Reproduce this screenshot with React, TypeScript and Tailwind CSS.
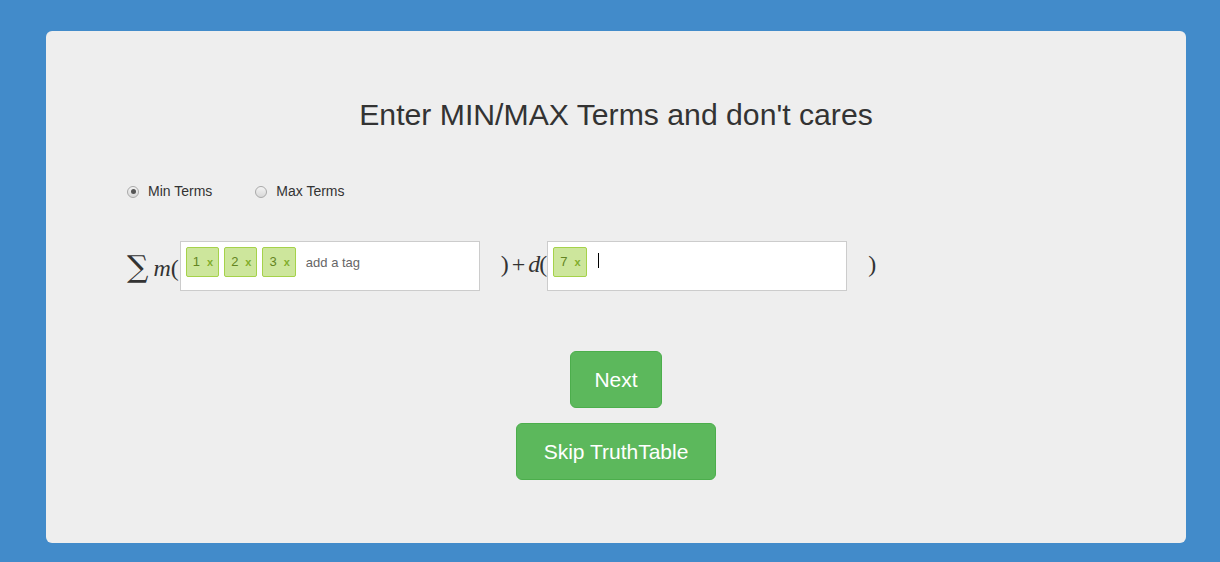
import React from "react";

function Radio({ checked, label }: { checked?: boolean; label: string }) {
  return (
    <label className="flex items-center gap-[9px] text-[14px] text-[#333]">
      <span className="flex h-[12px] w-[12px] items-center justify-center rounded-full border border-[#a9a9a9] bg-gradient-to-b from-[#f4f4f4] to-[#d8d8d8]">
        {checked && <span className="h-[5px] w-[5px] rounded-full bg-[#555]" />}
      </span>
      {label}
    </label>
  );
}

function Tag({ value }: { value: string }) {
  return (
    <span className="flex h-[30px] items-center rounded-[2px] border border-[#a5d24a] bg-[#cde69c] pl-[6px] pr-[5px] text-[13px] text-[#638421]">
      {value}
      <span className="ml-[7px] text-[11px] font-bold text-[#82ad2b]">x</span>
    </span>
  );
}

function TagBox({ tags, placeholder, cursor }: { tags: string[]; placeholder?: string; cursor?: boolean }) {
  return (
    <div className="flex h-[50px] w-[300px] shrink-0 items-start gap-[5px] border border-[#cccccc] bg-white p-[5px]">
      {tags.map((t) => (
        <Tag key={t} value={t} />
      ))}
      {placeholder && <span className="ml-[5px] mt-[6px] text-[13px] text-[#666]">{placeholder}</span>}
      {cursor && <span className="ml-[6px] mt-[6px] h-[15px] w-px bg-black" />}
    </div>
  );
}

const math = "font-['Liberation_Serif',serif] text-[24px] leading-none";

export default function App() {
  return (
    <div className="min-h-[562px] bg-[#428bca] pb-[19px] pl-[46px] pr-[34px] pt-[31px] font-['Liberation_Sans',Arial,sans-serif]">
      <div className="flex h-[512px] flex-col rounded-[6px] bg-[#eeeeee] px-[79px]">
        <h1 className="mt-[67px] text-center text-[30.2px] leading-[33px] text-[#333]">
          Enter MIN/MAX Terms and don't cares
        </h1>

        <div className="ml-[2px] mt-[50px] flex items-center gap-[43px]">
          <Radio checked label="Min Terms" />
          <Radio label="Max Terms" />
        </div>

        <div className="mt-[39px] flex items-start text-[#333]">
          <span className="ml-[2px] mt-[11px] font-['DejaVu_Serif',serif] text-[30px] leading-none">∑</span>
          <span className={`ml-[5px] mt-[15px] italic ${math}`}>m</span>
          <span className={`mr-[1px] mt-[15px] ${math}`}>(</span>
          <TagBox tags={["1", "2", "3"]} placeholder="add a tag" />
          <span className={`ml-[21px] mt-[11px] ${math}`}>)</span>
          <span className={`ml-[3px] mt-[11px] ${math}`}>+</span>
          <span className={`ml-[3px] mt-[11px] italic ${math}`}>d</span>
          <span className={`-ml-[1px] mt-[11px] ${math}`}>(</span>
          <TagBox tags={["7"]} cursor />
          <span className={`ml-[21px] mt-[11px] ${math}`}>)</span>
        </div>

        <div className="mt-[60px] flex flex-col items-center gap-[15px]">
          <button className="h-[57px] rounded-[6px] border border-[#4cae4c] bg-[#5cb85c] px-[23.5px] text-[21px] text-white">
            Next
          </button>
          <button className="h-[57px] rounded-[6px] border border-[#4cae4c] bg-[#5cb85c] px-[26.5px] text-[21px] text-white">
            Skip TruthTable
          </button>
        </div>
      </div>
    </div>
  );
}
